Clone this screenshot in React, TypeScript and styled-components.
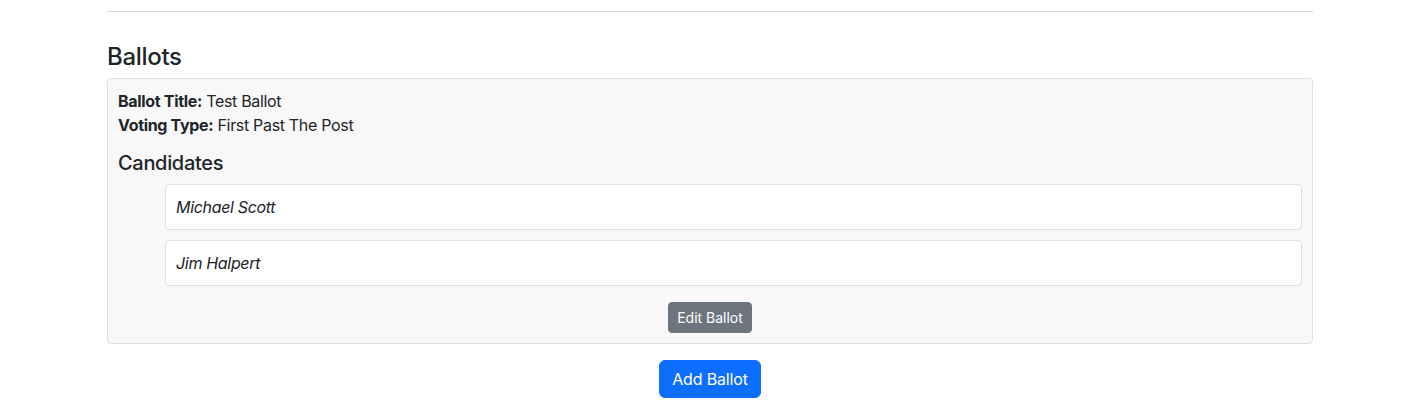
import React from "react";
import styled, { createGlobalStyle } from "styled-components";

const Global = createGlobalStyle`
  html, body { margin: 0; padding: 0; background: #fff; }
  body {
    font-family: Inter, "Liberation Sans", Arial, sans-serif;
    font-size: 16px;
    line-height: 1.5;
    color: #212529;
    letter-spacing: -0.02em;
  }
`;

const Page = styled.div`
  padding: 0 108px 0 107px;
`;

const Rule = styled.hr`
  margin: 11px 0 0;
  border: 0;
  border-top: 1px solid #d3d4d5;
`;

const Heading = styled.h3`
  margin: 31px 0 6px;
  font-size: 24px;
  font-weight: 500;
  line-height: 1.2;
`;

const BallotCard = styled.div`
  background: #f8f8f8;
  border: 1px solid #dfdfdf;
  border-radius: 4px;
  padding: 10px;
`;

const Field = styled.div`
  line-height: 24px;
  b { font-weight: 700; }
`;

const SubHeading = styled.h5`
  margin: 14px 0 9px;
  font-size: 20px;
  font-weight: 500;
  line-height: 24px;
`;

const CandidateList = styled.ul`
  list-style: none;
  margin: 0;
  padding: 0 0 0 47px;
  display: flex;
  flex-direction: column;
  gap: 10px;
`;

const Candidate = styled.li`
  background: #fff;
  border: 1px solid #dfdfdf;
  border-radius: 4px;
  padding: 10px;
  font-style: italic;
  line-height: 24px;
`;

const Actions = styled.div<{ $top: number }>`
  display: flex;
  justify-content: center;
  margin-top: ${(p) => p.$top}px;
`;

const Button = styled.button<{ $variant: "secondary" | "primary"; $small?: boolean }>`
  font-family: inherit;
  letter-spacing: ${(p) => (p.$small ? "0" : "-0.01em")};
  border: 1px solid ${(p) => (p.$variant === "primary" ? "#0d6efd" : "#6c757d")};
  background: ${(p) => (p.$variant === "primary" ? "#0d6efd" : "#6c757d")};
  color: #fff;
  border-radius: ${(p) => (p.$small ? "4px" : "6px")};
  padding: ${(p) => (p.$small ? "4px 8px" : "6px 12px")};
  font-size: ${(p) => (p.$small ? "14px" : "16px")};
  line-height: ${(p) => (p.$small ? "21px" : "24px")};
  cursor: pointer;
`;

export default function App() {
  return (
    <>
      <Global />
      <Page>
        <Rule />
        <Heading>Ballots</Heading>
        <BallotCard>
          <Field>
            <b>Ballot Title:</b> Test Ballot
          </Field>
          <Field>
            <b>Voting Type:</b> First Past The Post
          </Field>
          <SubHeading>Candidates</SubHeading>
          <CandidateList>
            <Candidate>Michael Scott</Candidate>
            <Candidate>Jim Halpert</Candidate>
          </CandidateList>
          <Actions $top={16}>
            <Button $variant="secondary" $small>
              Edit Ballot
            </Button>
          </Actions>
        </BallotCard>
        <Actions $top={16}>
          <Button $variant="primary">Add Ballot</Button>
        </Actions>
      </Page>
    </>
  );
}
